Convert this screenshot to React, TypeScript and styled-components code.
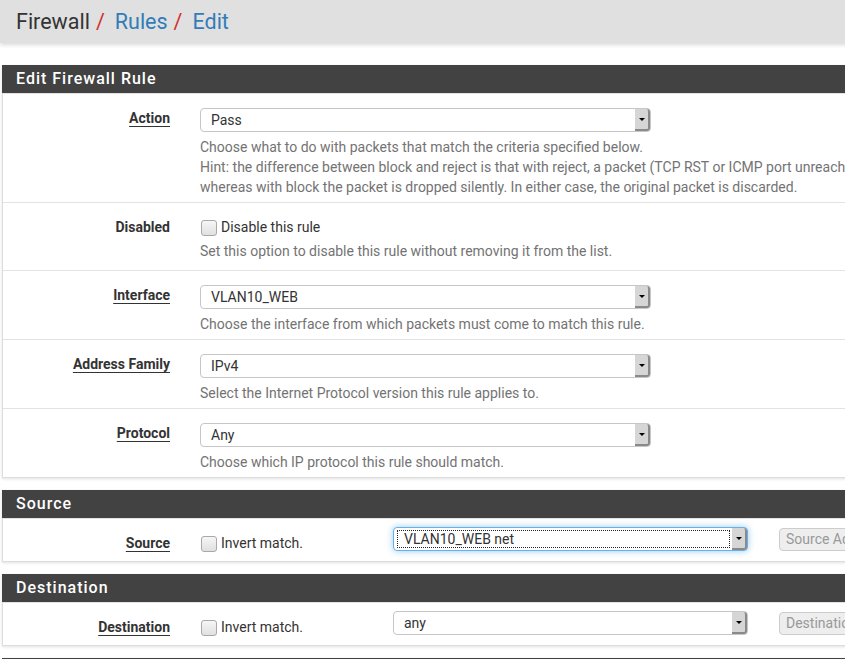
import React from 'react';
import styled, {createGlobalStyle} from 'styled-components';

const GlobalStyle = createGlobalStyle`
  html, body {
    margin: 0;
    padding: 0;
    overflow: hidden;
    background: #fff;
  }
  body {
    font-family: Roboto, "Liberation Sans", sans-serif;
    font-size: 14px;
    color: #333;
  }
`;

const Page = styled.div`
  width: 1100px;
`;

const TopBar = styled.div`
  height: 43px;
  background: #e0e0e0;
  box-shadow: 0 2px 4px rgba(0, 0, 0, 0.15);
  display: flex;
  align-items: center;
  padding-left: 16px;
  margin-bottom: 22px;
`;

const Crumb = styled.span<{link?: boolean}>`
  font-size: 21.5px;
  color: ${p => (p.link ? '#317cb9' : '#333')};
`;

const Slash = styled.span`
  font-size: 21.5px;
  color: #d0312d;
  margin: 0 10px 0 6px;
`;

const Panel = styled.div`
  margin: 0 0 12px 2px;
  border: 1px solid #ddd;
  border-top: none;
  background: #fff;
  box-shadow: 0 1px 3px rgba(0, 0, 0, 0.12);
`;

const PanelHeading = styled.div`
  background: #424242;
  color: #fff;
  font-size: 16px;
  font-weight: 500;
  letter-spacing: 1px;
  height: 28px;
  line-height: 28px;
  padding-left: 14px;
  margin-left: -1px;
`;

const Row = styled.div<{compact?: boolean}>`
  display: grid;
  grid-template-columns: 167px 1fr;
  column-gap: 30px;
  align-items: start;
  padding: ${p => (p.compact ? '8px 0 8px' : '14px 0 5px')};
  border-top: 1px solid #e3e3e3;
`;

const Label = styled.div<{underline?: boolean; drop?: number}>`
  text-align: right;
  font-weight: 700;
  line-height: 20px;
  padding-top: ${p => p.drop ?? 0}px;
  span {
    text-decoration: ${p => (p.underline ? 'underline' : 'none')};
    text-underline-offset: 3px;
    text-decoration-thickness: 1px;
  }
`;

const Field = styled.div`
  display: flex;
  flex-direction: column;
`;

const Inline = styled.div`
  display: flex;
  align-items: flex-start;
`;

const SelectBox = styled.div<{width: number; focused?: boolean}>`
  position: relative;
  box-sizing: border-box;
  width: ${p => p.width}px;
  height: 24px;
  border: 1px solid ${p => (p.focused ? '#66afe9' : '#c6c6c6')};
  border-radius: 4px;
  box-shadow: ${p => (p.focused ? '0 0 7px rgba(102, 175, 233, 0.65)' : 'none')};
  display: flex;
  align-items: center;
  padding-left: 10px;
  color: #333;
  background: #fff;
`;

const FocusRing = styled.div`
  position: absolute;
  left: 3px;
  top: 2px;
  right: 17px;
  bottom: 2px;
  border: 1px dotted #222;
`;

const SelectText = styled.span`
  position: relative;
`;

const Arrow = styled.div`
  position: absolute;
  right: 0;
  top: 0;
  bottom: 0;
  width: 13px;
  background: #d6d6d6;
  border-right: 2px solid #8a8a8a;
  border-bottom: 2px solid #8a8a8a;
  border-radius: 0 3px 3px 0;
  display: flex;
  align-items: center;
  justify-content: center;
  &::after {
    content: '';
    border-left: 3px solid transparent;
    border-right: 3px solid transparent;
    border-top: 3px solid #000;
  }
`;

const Help = styled.div<{tight?: boolean}>`
  color: #737373;
  line-height: 20px;
  margin: ${p => (p.tight ? '4px 0 4px' : '5px 0 0')};
  white-space: nowrap;
`;

const CheckLabel = styled.label`
  display: flex;
  align-items: center;
  line-height: 20px;
  color: #333;
`;

const CheckBox = styled.span`
  box-sizing: border-box;
  width: 16px;
  height: 16px;
  border: 1px solid #a9a9a9;
  border-radius: 3px;
  background: linear-gradient(#f6f6f6, #e0e0e0);
  margin: 2px 4px 0 1px;
`;

const CheckCol = styled.div`
  width: 193px;
  padding-top: 6px;
`;

const DisabledInput = styled.div`
  box-sizing: border-box;
  width: 200px;
  height: 23px;
  margin: 1px 0 0 31px;
  border: 1px solid #ccc;
  border-radius: 4px;
  background: #eee;
  color: #999;
  padding-left: 6px;
  line-height: 21px;
`;

type SelectProps = {value: string; width?: number; focused?: boolean};

function Select({value, width = 451, focused}: SelectProps) {
  return (
    <SelectBox width={width} focused={focused}>
      {focused && <FocusRing/>}
      <SelectText>{value}</SelectText>
      <Arrow/>
    </SelectBox>
  );
}

function Check({text}: {text: string}) {
  return (
    <CheckLabel>
      <CheckBox/>
      {text}
    </CheckLabel>
  );
}

export default function App() {
  return (
    <Page>
      <GlobalStyle/>
      <TopBar>
        <Crumb>Firewall</Crumb>
        <Slash>/</Slash>
        <Crumb link>Rules</Crumb>
        <Slash>/</Slash>
        <Crumb link>Edit</Crumb>
      </TopBar>

      <Panel>
        <PanelHeading>Edit Firewall Rule</PanelHeading>
        <Row>
          <Label underline><span>Action</span></Label>
          <Field>
            <Select value="Pass"/>
            <Help>
              Choose what to do with packets that match the criteria specified below.<br/>
              Hint: the difference between block and reject is that with reject, a packet (TCP RST or ICMP port unreachable for UDP) is returned to the sender,<br/>
              whereas with block the packet is dropped silently. In either case, the original packet is discarded.
            </Help>
          </Field>
        </Row>
        <Row>
          <Label><span>Disabled</span></Label>
          <Field>
            <Check text="Disable this rule"/>
            <Help tight>Set this option to disable this rule without removing it from the list.</Help>
          </Field>
        </Row>
        <Row>
          <Label underline><span>Interface</span></Label>
          <Field>
            <Select value="VLAN10_WEB"/>
            <Help>Choose the interface from which packets must come to match this rule.</Help>
          </Field>
        </Row>
        <Row>
          <Label underline><span>Address Family</span></Label>
          <Field>
            <Select value="IPv4"/>
            <Help>Select the Internet Protocol version this rule applies to.</Help>
          </Field>
        </Row>
        <Row>
          <Label underline><span>Protocol</span></Label>
          <Field>
            <Select value="Any"/>
            <Help>Choose which IP protocol this rule should match.</Help>
          </Field>
        </Row>
      </Panel>

      <Panel>
        <PanelHeading>Source</PanelHeading>
        <Row compact>
          <Label underline drop={6}><span>Source</span></Label>
          <Inline>
            <CheckCol><Check text="Invert match."/></CheckCol>
            <Select value="VLAN10_WEB net" width={355} focused/>
            <DisabledInput>Source Address</DisabledInput>
          </Inline>
        </Row>
      </Panel>

      <Panel>
        <PanelHeading>Destination</PanelHeading>
        <Row compact>
          <Label underline drop={6}><span>Destination</span></Label>
          <Inline>
            <CheckCol><Check text="Invert match."/></CheckCol>
            <Select value="any" width={355}/>
            <DisabledInput>Destination</DisabledInput>
          </Inline>
        </Row>
      </Panel>

      <Panel>
        <PanelHeading>Extra Options</PanelHeading>
      </Panel>
    </Page>
  );
}
